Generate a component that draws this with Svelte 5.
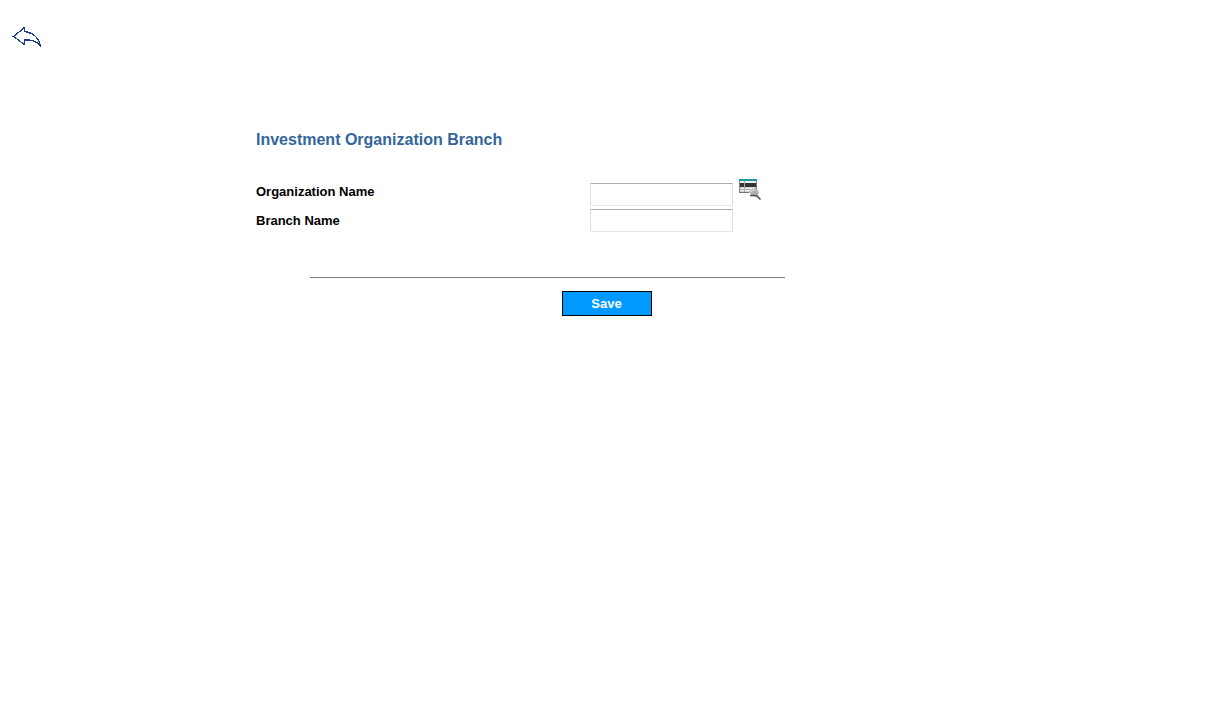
<script>
  let organization = $state('');
  let branch = $state('');
</script>

<header>
  <a class="back" href="#back" aria-label="Back">
    <svg width="32" height="24" viewBox="0 0 32 24" shape-rendering="crispEdges" aria-hidden="true">
      <path
        d="M2.5 11.5 L13.5 2.5 V6.5 C20 7.500 27.5 10 29.5 21.5 C26 16 20 14.5 13.5 15 V19.5 Z"
        fill="#fff"
        stroke="#1c3c87"
        stroke-width="1.3"
      />
    </svg>
  </a>
</header>

<main>
  <h1>Investment Organization Branch</h1>
  <form onsubmit={(event) => event.preventDefault()}>
    <div class="columns">
      <div class="labels">
        <label for="organization">Organization Name</label>
        <label for="branch">Branch Name</label>
      </div>
      <div class="fields">
        <input id="organization" type="text" bind:value={organization} />
        <input id="branch" type="text" bind:value={branch} />
      </div>
      <button class="lookup" type="button" aria-label="Look up organization">
        <svg width="24" height="24" viewBox="0 0 24 24" aria-hidden="true">
          <path fill="#d4d6d6" d="M1 1h18v14H1z" />
          <path fill="#858585" d="M1 2h1v13H1z" />
          <path fill="#e9f2f2" d="M2 3h16v2H2z" />
          <path fill="#249895" d="M1 1h18v2H1z" />
          <path fill="#343434" d="M2 5h16v4H2z" />
          <path fill="#777" d="M18 3h1v9h-1zM2 14h9v1H2z" />
          <path fill="#b0b0b0" d="M2 11h10v1H2z" />
          <path fill="#eee" d="M3 10h14v1H3zM3 12h8v1H3z" />
          <path fill="#aaa" d="M6 3h1v11H6z" />
          <path d="M11.5 15l2.5-4 4-1 3 4-1 3-3 2z" fill="#b0b0b0" />
          <path d="M13 14l2-2h2" fill="none" stroke="#ddd" />
          <path d="M12 17.500h5l2 .500 3.500 3.500" fill="none" stroke="#4b4b4b" stroke-width="1.5" />
        </svg>
      </button>
    </div>
    <hr />
    <button class="save" type="submit">Save</button>
  </form>
</main>

<style>
  :global(body) {
    margin: 0;
    background: #fff;
    color: #000;
    font-family: "Liberation Sans", Arial, sans-serif;
  }

  header {
    padding: 25px 11px 0;
  }

  .back {
    display: inline-flex;
  }

  .back svg {
    display: block;
  }

  main {
    max-width: 701px;
    margin: 77px auto 0;
  }

  h1 {
    margin: 0;
    color: #336699;
    font-size: 16px;
    line-height: 20px;
  }

  form {
    display: flex;
    flex-direction: column;
    margin-top: 27px;
  }

  .columns {
    display: flex;
    align-items: flex-start;
  }

  .labels {
    display: flex;
    flex-direction: column;
    width: 334px;
  }

  label {
    font-size: 13px;
    font-weight: bold;
    line-height: 29px;
  }

  .fields {
    display: flex;
    flex-direction: column;
    gap: 3px;
    padding-top: 6px;
  }

  input {
    box-sizing: border-box;
    width: 143px;
    height: 23px;
    padding: 2px;
    border: 1px solid #dbdfe6;
    border-top-color: #abadb3;
    border-bottom-color: #e3e9ef;
    border-radius: 1px;
    background: #fff;
    font: 13px "Liberation Sans", Arial, sans-serif;
  }

  .lookup {
    display: flex;
    margin: 1px 0 0 5px;
    padding: 0;
    border: 0;
    background: none;
    cursor: pointer;
  }

  hr {
    width: 475px;
    height: 1px;
    margin: 42px 0 13px 54px;
    border: 0;
    background: #808080;
  }

  .save {
    align-self: center;
    width: 90px;
    height: 25px;
    padding: 0;
    border: 1px solid #000;
    background: #0099ff;
    color: #fff;
    font: bold 13px "Liberation Sans", Arial, sans-serif;
    cursor: pointer;
  }
</style>
